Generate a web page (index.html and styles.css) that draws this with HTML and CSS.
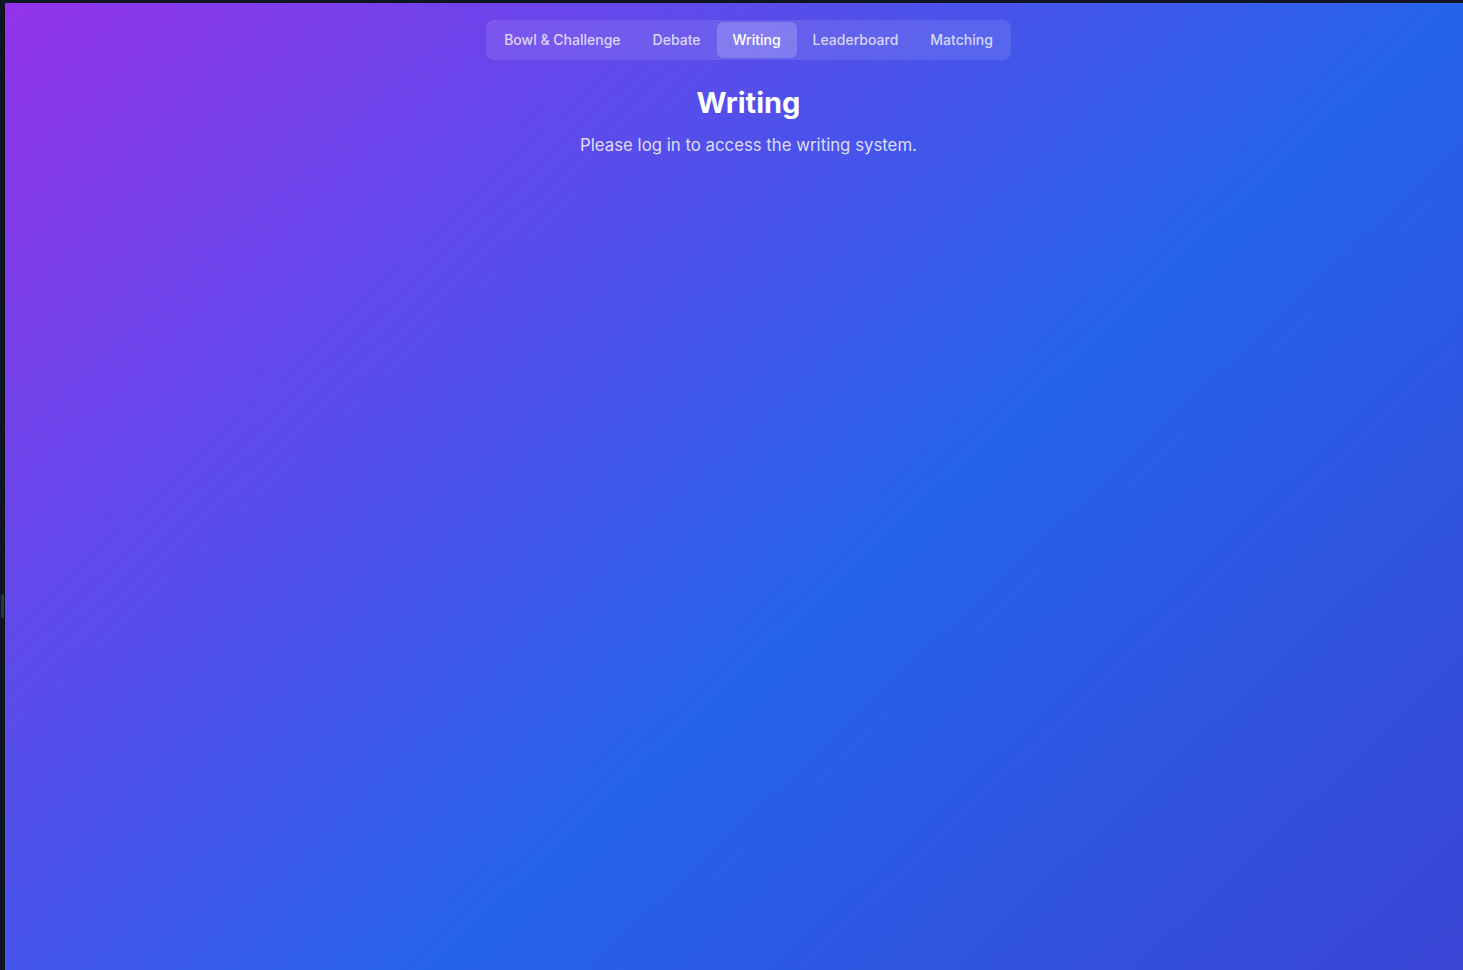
FILE: index.html
```html
<!DOCTYPE html>
<html lang="en">
<head>
<meta charset="utf-8">
<title>Writing</title>
<link rel="stylesheet" href="styles.css">
</head>
<body>
<div class="frame">
  <div class="handle"></div>
  <main class="page">
    <nav class="tabs">
      <button class="tab">Bowl &amp; Challenge</button>
      <button class="tab">Debate</button>
      <button class="tab active">Writing</button>
      <button class="tab">Leaderboard</button>
      <button class="tab">Matching</button>
    </nav>
    <h1 class="title">Writing</h1>
    <p class="subtitle">Please log in to access the writing system.</p>
  </main>
</div>
</body>
</html>
```
FILE: styles.css
```css
* { box-sizing: border-box; }
html, body { margin: 0; height: 100%; }
body {
  background: #0f1523;
  font-family: Inter, "Noto Sans", "Liberation Sans", sans-serif;
  overflow: hidden;
}
.frame {
  position: relative;
  height: 100%;
  padding: 3px 0 0 5px;
}
.handle {
  position: absolute;
  left: 1px;
  top: 594px;
  width: 3px;
  height: 24px;
  border-radius: 2px;
  background: #2e3545;
}
.page {
  height: 100%;
  background: linear-gradient(to bottom right, #9333ea 0%, #2563eb 50%, #4338ca 100%) top left / 100% 1376px no-repeat;
  display: flex;
  flex-direction: column;
  align-items: center;
  padding: 17px 0 0 29px;
}
.tabs {
  display: flex;
  padding: 2px;
  border-radius: 8px;
  background: rgba(255, 255, 255, 0.1);
}
.tab {
  font: 500 14px/20px Inter, "Noto Sans", "Liberation Sans", sans-serif;
  color: rgba(255, 255, 255, 0.76);
  background: transparent;
  border: 0;
  padding: 8px 16px;
  border-radius: 6px;
}
.tab.active {
  color: #fff;
  background: rgba(255, 255, 255, 0.18);
}
.title {
  margin: 25px 0 0;
  font-size: 29px;
  line-height: 36px;
  font-weight: 700;
  color: #fff;
}
.subtitle {
  margin: 10px 0 0;
  font-size: 16.8px;
  line-height: 28px;
  color: rgba(255, 255, 255, 0.82);
}
```
